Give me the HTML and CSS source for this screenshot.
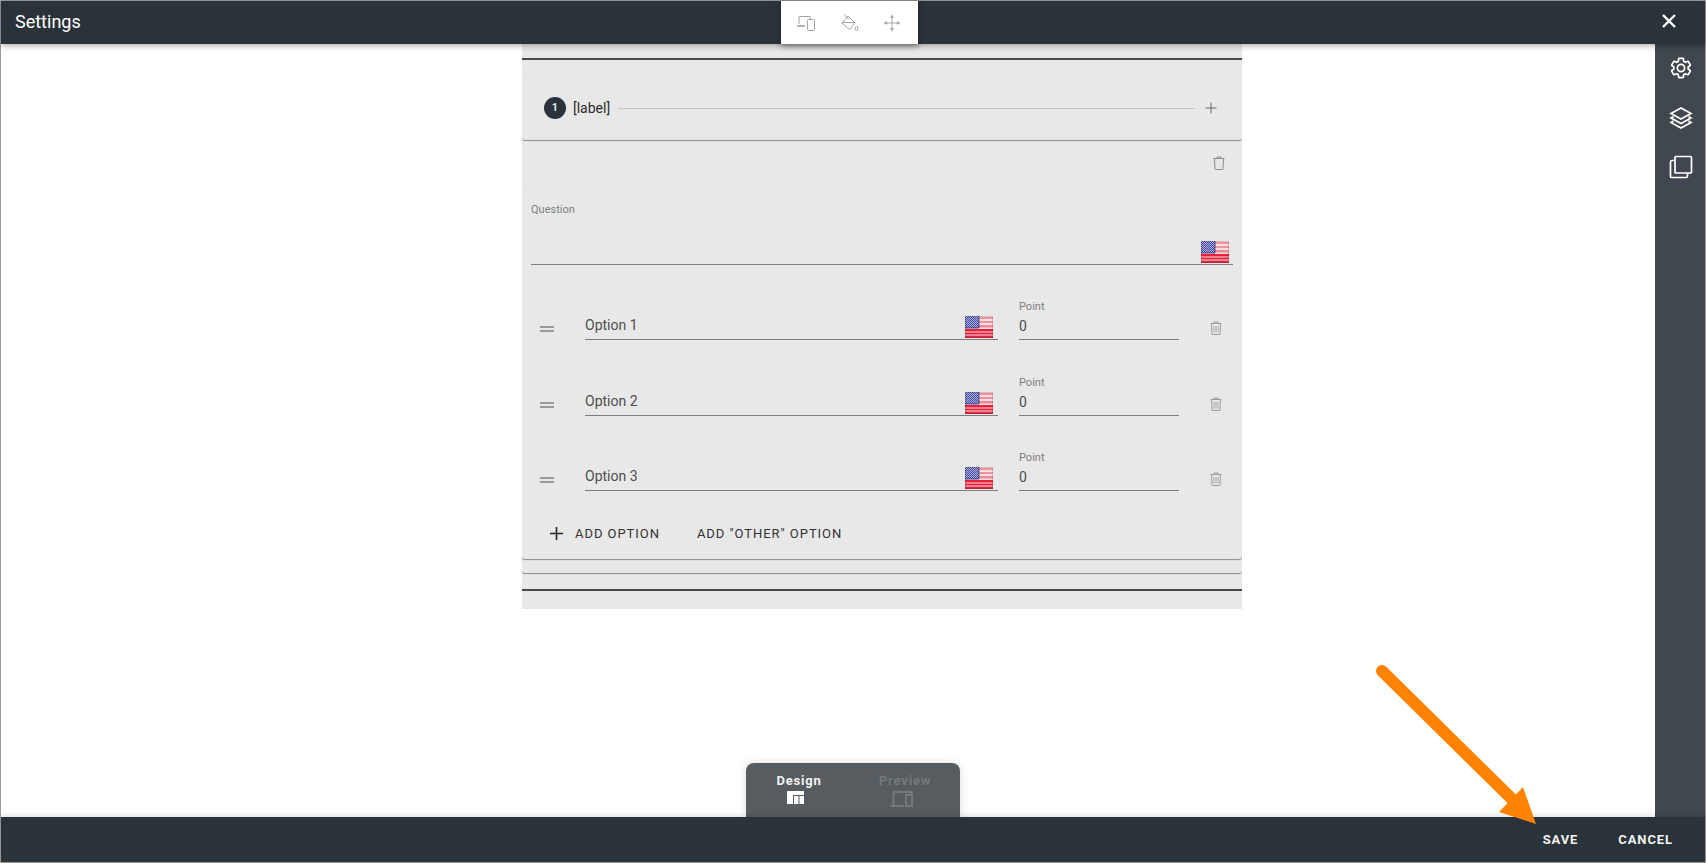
FILE: index.html
```html
<!DOCTYPE html>
<html>
<head>
  <meta charset="utf-8">
  <title>Settings</title>
  <link rel="stylesheet" href="styles.css">
</head>
<body>
  <svg class="defs" width="0" height="0">
    <defs>
      <pattern id="flagStars" width="2" height="2" patternUnits="userSpaceOnUse">
        <rect width="2" height="2" fill="#45489f"/>
        <rect width="1" height="1" fill="#aeb0dc"/>
        <rect x="1" y="1" width="1" height="1" fill="#aeb0dc"/>
      </pattern>
      <symbol id="flag" viewBox="0 0 28 22">
        <rect width="28" height="22" fill="#f7dfe2"/>
        <rect y="1" width="28" height="2" fill="#f1929e"/>
        <rect y="5" width="28" height="2" fill="#f1929e"/>
        <rect y="9" width="28" height="2.500" fill="#f08a97"/>
        <rect y="12" width="28" height="1" fill="#f7dfe2"/>
        <rect y="13" width="28" height="2.500" fill="#e8203a"/>
        <rect y="16.500" width="28" height="2" fill="#e8203a"/>
        <rect y="19.500" width="28" height="2.500" fill="#d92a40"/>
        <rect width="14" height="12" fill="url(#flagStars)"/>
        <path d="M0 12h14M14 0v12" stroke="#2c2f85" stroke-width=".8"/>
        <rect x=".5" y=".5" width="27" height="21" fill="none" stroke="#000" stroke-opacity=".15"/>
      </symbol>
      <symbol id="trash" viewBox="0 0 12 14">
        <path d="M.5 2.500h11M4 2.500V1h4v1.500M1.500 2.500l.5 10.500c0 .3.200.5.500.5h7c.3 0 .5-.2.500-.5l.5-10.500" fill="none" stroke="#9b9b9b"/>
        <path d="M4 5v6.500M6 5v6.500M8 5v6.500" fill="none" stroke="#9b9b9b" stroke-width=".8"/>
      </symbol>
    </defs>
  </svg>

  <div class="window">
    <header class="topbar">
      <div class="topbar-title">Settings</div>
      <div class="toolbar">
        <svg class="tool-icon" viewBox="0 0 20 20"><path d="M3 11V3.500h11V6" fill="none" stroke="#a3a3a3"/><path d="M1 12h8v2H1z" fill="#b5b5b5"/><rect x="11.500" y="6.500" width="7" height="11" rx="1" fill="#fff" stroke="#a3a3a3"/></svg>
        <svg class="tool-icon" viewBox="0 0 20 20"><path d="M9 3l7 7-5.500 6.500L3 10z M3 9.500h12.500M5 1.500l5 5" fill="none" stroke="#a3a3a3"/><ellipse cx="17.500" cy="15.500" rx="1.300" ry="2" fill="none" stroke="#a3a3a3"/></svg>
        <svg class="tool-icon" viewBox="0 0 20 20"><path d="M10 2v16M2 10h16" fill="none" stroke="#a3a3a3" stroke-width=".9"/><path d="M10 2l2 3H8zM10 18l2-3H8zM2 10l3-2v4zM18 10l-3-2v4z" fill="#a3a3a3"/></svg>
      </div>
      <button class="close-btn">
        <svg viewBox="0 0 16 16" width="16" height="16"><path d="M2 2l12 12M14 2L2 14" stroke="#fff" stroke-width="2.400" fill="none"/></svg>
      </button>
    </header>

    <div class="main">
      <div class="canvas">
        <div class="panel">
          <div class="rule"></div>

          <div class="section-card">
            <span class="step-num">1</span>
            <span class="step-label">[label]</span>
            <span class="step-line"></span>
            <svg class="step-plus" viewBox="0 0 12 12"><path d="M6 .5v11M.5 6h11" stroke="#666" fill="none"/></svg>
          </div>

          <div class="delete-row">
            <svg class="trash-plain" viewBox="0 0 12 14"><path d="M.5 2.500h11M4 2.500V1h4v1.500M1.500 2.500l.5 10.500c0 .3.200.5.500.5h7c.3 0 .5-.2.500-.5l.5-10.500" fill="none" stroke="#8c8c8c"/></svg>
          </div>

          <div class="card-stack">
            <div class="question-card">
              <div class="question">
                <div class="small-label">Question</div>
                <svg class="flag"><use href="#flag"/></svg>
              </div>

              <div class="option-row">
                <div class="handle"></div>
                <div class="option-field"><span>Option 1</span><svg class="flag"><use href="#flag"/></svg></div>
                <div class="point-field"><div class="small-label">Point</div><div class="point-value">0</div></div>
                <svg class="trash"><use href="#trash"/></svg>
              </div>
              <div class="option-row">
                <div class="handle"></div>
                <div class="option-field"><span>Option 2</span><svg class="flag"><use href="#flag"/></svg></div>
                <div class="point-field"><div class="small-label">Point</div><div class="point-value">0</div></div>
                <svg class="trash"><use href="#trash"/></svg>
              </div>
              <div class="option-row">
                <div class="handle"></div>
                <div class="option-field"><span>Option 3</span><svg class="flag"><use href="#flag"/></svg></div>
                <div class="point-field"><div class="small-label">Point</div><div class="point-value">0</div></div>
                <svg class="trash"><use href="#trash"/></svg>
              </div>

              <div class="add-row">
                <svg class="add-plus" viewBox="0 0 13 13"><path d="M6.500 0v13M0 6.500h13" stroke="#222" stroke-width="1.600" fill="none"/></svg>
                <span class="add-link">ADD OPTION</span>
                <span class="add-link">ADD "OTHER" OPTION</span>
              </div>
            </div>
          </div>

          <div class="rule rule-bottom"></div>
        </div>

        <div class="mode-tabs">
          <div class="mode-tab">
            <span>Design</span>
            <svg class="mode-icon" width="17" height="13" viewBox="0 0 17 13"><path d="M0 0h17v4H6v9H0zM7 5h4.500v8H7zM12.500 5H17v8h-4.500z" fill="#fff"/></svg>
          </div>
          <div class="mode-tab mode-off">
            <span>Preview</span>
            <svg class="mode-icon" width="23" height="16" viewBox="0 0 23 16"><path d="M3.500 14V1h18v2M0 15h14" fill="none" stroke="#73787b" stroke-width="2"/><rect x="16" y="4" width="6" height="11" fill="none" stroke="#73787b" stroke-width="2"/></svg>
          </div>
        </div>
      </div>

      <aside class="sidebar">
        <svg class="side-icon" viewBox="0 0 24 24"><path d="M19.140 12.940c.04-.3.060-.61.060-.94 0-.32-.02-.64-.07-.94l2.030-1.580c.18-.14.230-.41.120-.61l-1.920-3.320c-.12-.22-.37-.29-.59-.22l-2.390.96c-.5-.38-1.030-.7-1.620-.94l-.36-2.540c-.04-.24-.24-.41-.48-.41h-3.840c-.24 0-.43.170-.47.410l-.36 2.540c-.59.240-1.130.570-1.620.940l-2.390-.96c-.22-.08-.47 0-.59.220L2.740 8.870c-.12.210-.08.470.120.610l2.030 1.580c-.05.3-.09.630-.09.940s.020.640.070.940l-2.030 1.580c-.18.140-.23.410-.12.610l1.920 3.320c.12.220.37.290.59.220l2.390-.96c.5.380 1.030.7 1.620.94l.36 2.540c.05.240.24.410.48.410h3.840c.24 0 .44-.17.47-.41l.36-2.540c.59-.24 1.130-.56 1.620-.94l2.390.96c.22.080.47 0 .59-.22l1.920-3.320c.12-.22.070-.47-.12-.61l-2.010-1.580zM12 15.600c-1.980 0-3.600-1.620-3.600-3.600s1.620-3.600 3.600-3.600 3.600 1.620 3.600 3.600-1.620 3.600-3.600 3.600z"/></svg>
        <svg class="side-icon" viewBox="0 0 24 24"><path d="M12 2l10 5.500-10 5.500L2 7.500zM4.500 10.500L2 12l10 5.500L22 12l-2.500-1.500M4.500 15L2 16.500 12 22l10-5.500-2.500-1.500"/></svg>
        <svg class="side-icon" viewBox="0 0 24 24"><rect x="6" y="1.500" width="16.500" height="16.500" rx="1"/><path d="M6 5.500H3c-.8 0-1.500.7-1.500 1.500v14.500c0 .6.500 1 1 1H17c.8 0 1.500-.7 1.500-1.500v-3"/></svg>
      </aside>
    </div>

    <footer class="bottombar">
      <span class="foot-btn">SAVE</span>
      <span class="foot-btn">CANCEL</span>
    </footer>

    <svg class="arrow" width="190" height="190" viewBox="0 0 190 190">
      <path d="M11 11L148 146" stroke="#ff8200" stroke-width="12" stroke-linecap="round" fill="none"/>
      <path d="M165 164L128 152L152 127z" fill="#ff8200"/>
    </svg>
  </div>
</body>
</html>
```

FILE: styles.css
```css
* {
  box-sizing: border-box;
}
html, body {
  margin: 0;
  height: 100%;
  overflow: hidden;
}
body {
  font-family: Roboto, "Liberation Sans", sans-serif;
  color: #333;
  background: #fff;
}
.defs {
  position: absolute;
}
.window {
  position: relative;
  height: 100vh;
  display: flex;
  flex-direction: column;
  border: 1px solid #9c9c9c;
}

/* top bar */
.topbar {
  height: 43px;
  flex: none;
  display: flex;
  align-items: center;
  background: #2b333a;
  color: #fff;
  position: relative;
  z-index: 3;
  box-shadow: 0 2px 6px rgba(0,0,0,.3);
}
.topbar-title {
  width: 780px;
  padding: 0 0 2px 14px;
  font-size: 18px;
}
.toolbar {
  width: 137px;
  height: 43px;
  background: #fff;
  display: flex;
  align-items: center;
  gap: 23px;
  padding-left: 15px;
  box-shadow: 0 2px 6px rgba(0,0,0,.45);
}
.tool-icon {
  width: 20px;
  height: 20px;
}
.close-btn {
  margin: 0 28px 3px auto;
  width: 16px;
  height: 16px;
  padding: 0;
  border: 0;
  background: none;
  display: flex;
}

/* main area */
.main {
  flex: 1;
  display: flex;
  min-height: 0;
}
.canvas {
  flex: 1;
  position: relative;
  padding-left: 521px;
}
.panel {
  width: 720px;
  height: 565px;
  padding-top: 14px;
  background: #e8e8e8;
  overflow: hidden;
}
.rule {
  height: 2px;
  background: #4a4a4a;
}
.rule-bottom {
  margin-top: 16px;
}
.section-card {
  height: 64px;
  margin-top: 16px;
  padding: 0 25px 0 22px;
  display: flex;
  align-items: center;
  border-radius: 3px;
  box-shadow: 0 1px 1px rgba(0,0,0,.4), 0 -1px 1px rgba(0,0,0,.02);
}
.step-num {
  width: 22px;
  height: 22px;
  border-radius: 50%;
  background: #2b333a;
  color: #fff;
  font-size: 11px;
  font-weight: 500;
  line-height: 22px;
  text-align: center;
}
.step-label {
  margin-left: 7px;
  font-size: 14px;
  color: #2c2c2c;
}
.step-line {
  flex: 1;
  height: 1px;
  margin: 0 10px 0 8px;
  background: #c4c4c4;
}
.step-plus {
  width: 12px;
  height: 12px;
}
.delete-row {
  height: 46px;
  display: flex;
  align-items: center;
  justify-content: flex-end;
  padding-right: 17px;
}
.trash-plain {
  width: 12px;
  height: 14px;
}
.card-stack {
  padding-bottom: 14px;
  border-radius: 3px;
  box-shadow: 0 1px 1px rgba(0,0,0,.4);
}
.question-card {
  padding: 0 9px;
  height: 373px;
  border-radius: 3px;
  box-shadow: 0 1px 1px rgba(0,0,0,.4), 0 -1px 1px rgba(0,0,0,.02);
}
.small-label {
  font-size: 11px;
  line-height: 13px;
  color: #808080;
}
.question {
  height: 79px;
  padding-top: 17px;
  border-bottom: 1px solid #7d7d7d;
  display: flex;
  justify-content: space-between;
}
.question .flag {
  margin: 38px 4px 0 0;
}
.flag {
  width: 28px;
  height: 22px;
  flex: none;
}
.option-row {
  height: 75.250px;
  padding-left: 9px;
  display: flex;
  align-items: flex-end;
}
.handle {
  width: 14px;
  height: 6px;
  margin: 0 31px 8px 0;
  border-top: 2px solid #9a9a9a;
  border-bottom: 2px solid #9a9a9a;
}
.option-field {
  width: 413px;
  height: 36px;
  display: flex;
  align-items: flex-end;
  justify-content: space-between;
  border-bottom: 1px solid #7d7d7d;
  font-size: 14px;
  line-height: 24px;
  color: #4d4d4d;
}
.option-field span {
  margin-bottom: 2px;
}
.option-field .flag {
  margin: 0 5px 1px 0;
}
.point-field {
  width: 160px;
  margin-left: 21px;
  border-bottom: 1px solid #7d7d7d;
}
.point-value {
  height: 26px;
  font-size: 14px;
  line-height: 27px;
  color: #4d4d4d;
}
.trash {
  width: 12px;
  height: 14px;
  margin: 0 0 5px 31px;
}
.add-row {
  padding: 35px 0 17px 19px;
  display: flex;
  align-items: center;
}
.add-plus {
  width: 13px;
  height: 13px;
  margin-right: 12px;
}
.add-link {
  margin-right: 37px;
  font-size: 13px;
  line-height: 16px;
  letter-spacing: .95px;
  color: #333;
}

/* design / preview tabs */
.mode-tabs {
  position: absolute;
  left: 745px;
  bottom: 0;
  width: 214px;
  height: 54px;
  display: flex;
  padding-right: 2px;
  background: #565c5f;
  border-radius: 8px 8px 0 0;
  box-shadow: 0 0 8px rgba(0,0,0,.15);
}
.mode-tab {
  flex: 1;
  display: flex;
  flex-direction: column;
  align-items: center;
  padding-top: 10px;
  gap: 3px;
  font-size: 13px;
  line-height: 15px;
  font-weight: 700;
  letter-spacing: .8px;
  color: #f1f1f1;
}
.mode-icon {
  margin-right: 8px;
}
.mode-off {
  color: #73787b;
}

/* right rail */
.sidebar {
  width: 50px;
  flex: none;
  background: #40474e;
  padding: 12px 0 0 2px;
  display: flex;
  flex-direction: column;
  align-items: center;
  gap: 25.500px;
}
.side-icon {
  width: 24px;
  height: 24px;
  fill: none;
  stroke: #fff;
  stroke-width: 1.700;
}

/* bottom bar */
.bottombar {
  height: 45px;
  flex: none;
  display: flex;
  align-items: center;
  justify-content: flex-end;
  gap: 40px;
  padding-right: 32px;
  background: #2b333a;
  position: relative;
  z-index: 2;
  box-shadow: 0 -2px 5px rgba(0,0,0,.12);
}
.foot-btn {
  font-size: 13px;
  font-weight: 700;
  letter-spacing: .9px;
  color: #f1f1f1;
}
.arrow {
  position: absolute;
  left: 1370px;
  top: 659px;
  z-index: 4;
}
```
